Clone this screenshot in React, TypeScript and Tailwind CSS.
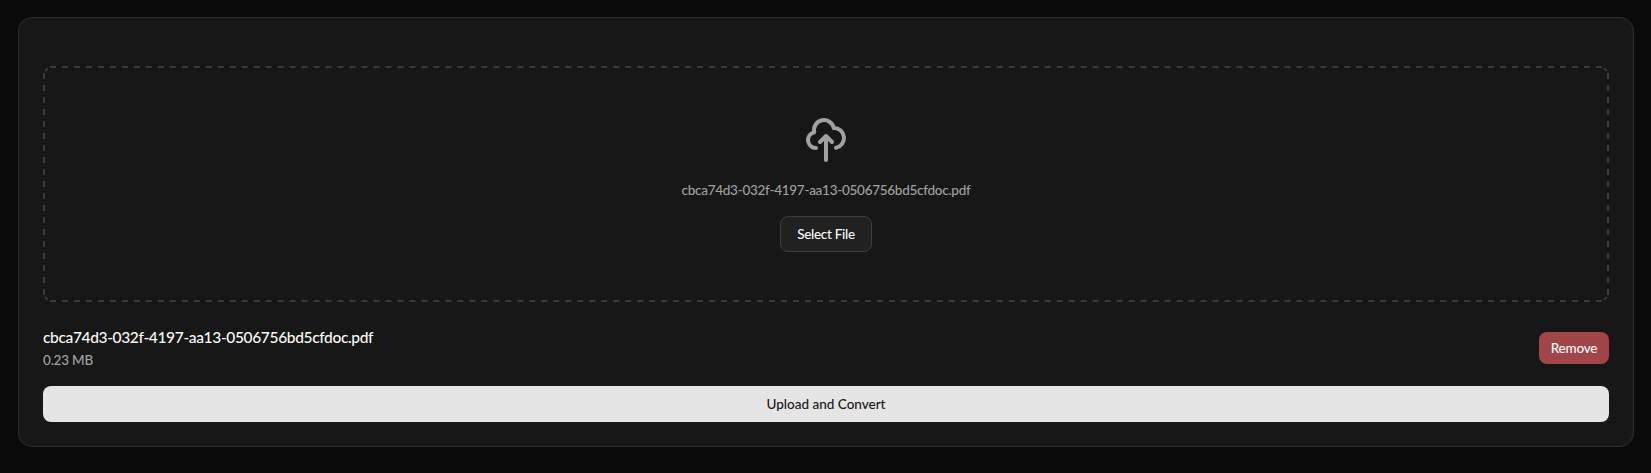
const FILE = {
  name: 'cbca74d3-032f-4197-aa13-0506756bd5cfdoc.pdf',
  size: '0.23 MB',
};

function CloudUploadIcon() {
  return (
    <svg
      className="size-12 text-[#a1a1a1]"
      viewBox="0 0 24 24"
      fill="none"
      stroke="currentColor"
      strokeWidth="2"
      strokeLinecap="round"
      strokeLinejoin="round"
      aria-hidden="true"
    >
      <path d="M7 16a4 4 0 01-.88-7.903A5 5 0 1115.9 6L16 6a5 5 0 011 9.9M15 13l-3-3m0 0l-3 3m3-3v12" />
    </svg>
  );
}

// Dashed outline with an even 6px dash and 6px gap on every side.
function DashedOutline() {
  return (
    <svg
      className="pointer-events-none absolute inset-0 size-full text-[#3a3a3a]"
      viewBox="0 0 1566 236"
      fill="none"
      stroke="currentColor"
      strokeWidth="2"
      aria-hidden="true"
    >
      <path d="M7 1H1559M7 235H1559" strokeDasharray="6 5.984" />
      <path d="M1 7V229M1565 7V229" strokeDasharray="6 6" />
      <path d="M2 4.8L5 2.2M1564 4.8L1561 2.2M2 231.2L5 233.8M1564 231.2L1561 233.8" />
    </svg>
  );
}

export default function App() {
  return (
    <main className="h-[473px] bg-[#0a0a0a] pt-[17px] pr-[17px] pl-[18px] font-['Lato','Liberation_Sans',sans-serif] text-[#fafafa]">
      <section className="h-[430px] rounded-[14px] border border-[#2e2e2e] bg-[#171717] px-6 pt-12 pb-6">
        <div className="relative flex h-[236px] flex-col items-center pt-[50px]">
          <DashedOutline />
          <CloudUploadIcon />
          <p className="mt-4 text-[13.5px] leading-5 font-medium tracking-[-0.27px] whitespace-nowrap text-[#a1a1a1]">
            {FILE.name}
          </p>
          <button className="mt-4 h-9 w-[92px] rounded-lg border border-[#3d3d3d] bg-[#212121] text-[13.5px] font-medium tracking-[-0.3px] whitespace-nowrap">
            Select File
          </button>
        </div>
        <div className="mt-6 flex items-center justify-between">
          <div>
            <p className="-mt-px mb-px text-[15.5px] leading-6 font-medium tracking-[-0.35px]">{FILE.name}</p>
            <p className="text-[13.5px] leading-5 font-medium tracking-[-0.2px] text-[#a1a1a1]">{FILE.size}</p>
          </div>
          <button className="h-8 w-[70px] rounded-lg bg-[#a14648] text-[13.5px] font-medium tracking-[-0.2px]">
            Remove
          </button>
        </div>
        <button className="mt-4 h-9 w-full rounded-lg bg-[#e5e5e5] text-[13.5px] font-medium text-[#171717]">
          Upload and Convert
        </button>
      </section>
    </main>
  );
}
